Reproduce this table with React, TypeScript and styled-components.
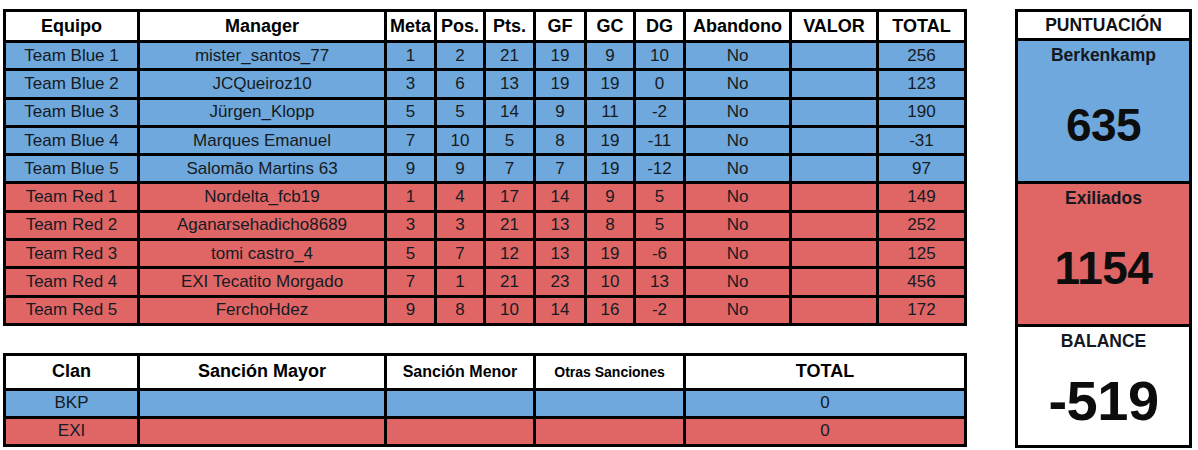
import React from "react";
import styled, { createGlobalStyle } from "styled-components";

const Global = createGlobalStyle`
  html, body { margin: 0; padding: 0; background: #ffffff; }
  body { font-family: "Liberation Sans", Arial, sans-serif; color: #111; }
`;

const BLUE = "#6fa8dc";
const RED = "#e06666";

const Page = styled.div`
  display: flex;
  align-items: flex-start;
  padding: 9px 0 0 3px;
  width: 1198px;
  height: 450px;
  box-sizing: border-box;
`;

const LeftCol = styled.div`
  display: flex;
  flex-direction: column;
  gap: 27px;
  width: 964px;
`;

const MainGrid = styled.div`
  display: grid;
  grid-template-columns: 131px 244px 47px 46px 47px 48px 46px 47px 103px 84px 85px;
  grid-template-rows: 28px repeat(10, 25.3px);
  gap: 3px;
  padding: 3px;
  background: #000;
`;

const ClanGrid = styled.div`
  display: grid;
  grid-template-columns: 131px 244px 146px 147px 278px;
  grid-template-rows: 32px 25px 25px;
  gap: 3px;
  padding: 3px;
  background: #000;
`;

const Cell = styled.div<{ $bg: string }>`
  background: ${(p) => p.$bg};
  display: flex;
  align-items: center;
  justify-content: center;
  font-size: 17px;
  color: #161a22;
  white-space: nowrap;
  overflow: hidden;
`;

const HeadCell = styled.div<{ $size?: number }>`
  background: #fff;
  display: flex;
  align-items: center;
  justify-content: center;
  font-weight: bold;
  font-size: ${(p) => p.$size ?? 18}px;
  color: #000;
  white-space: nowrap;
  overflow: hidden;
`;

const Panel = styled.div`
  margin-left: 48px;
  width: 177px;
  height: 439px;
  box-sizing: border-box;
  display: grid;
  grid-template-rows: 26px 140px 140px 1fr;
  gap: 3px;
  padding: 3px;
  background: #000;
`;

const PanelHead = styled.div`
  background: #fff;
  display: flex;
  align-items: center;
  justify-content: center;
  font-weight: bold;
  font-size: 17.5px;
  color: #111;
`;

const Section = styled.div<{ $bg: string }>`
  background: ${(p) => p.$bg};
  display: flex;
  flex-direction: column;
  align-items: center;
`;

const SectionLabel = styled.div`
  height: 28px;
  display: flex;
  align-items: center;
  font-weight: bold;
  font-size: 17.5px;
  color: #15181f;
`;

const BigNumber = styled.div<{ $size: number }>`
  flex: 1;
  display: flex;
  align-items: center;
  justify-content: center;
  font-weight: bold;
  font-size: ${(p) => p.$size}px;
  color: #0d0d0d;
  letter-spacing: -0.5px;
`;

type Row = (string | number)[];

const rows: Row[] = [
  ["Team Blue 1", "mister_santos_77", 1, 2, 21, 19, 9, 10, "No", "", 256],
  ["Team Blue 2", "JCQueiroz10", 3, 6, 13, 19, 19, 0, "No", "", 123],
  ["Team Blue 3", "Jürgen_Klopp", 5, 5, 14, 9, 11, -2, "No", "", 190],
  ["Team Blue 4", "Marques Emanuel", 7, 10, 5, 8, 19, -11, "No", "", -31],
  ["Team Blue 5", "Salomão Martins 63", 9, 9, 7, 7, 19, -12, "No", "", 97],
  ["Team Red 1", "Nordelta_fcb19", 1, 4, 17, 14, 9, 5, "No", "", 149],
  ["Team Red 2", "Aganarsehadicho8689", 3, 3, 21, 13, 8, 5, "No", "", 252],
  ["Team Red 3", "tomi castro_4", 5, 7, 12, 13, 19, -6, "No", "", 125],
  ["Team Red 4", "EXI Tecatito Morgado", 7, 1, 21, 23, 10, 13, "No", "", 456],
  ["Team Red 5", "FerchoHdez", 9, 8, 10, 14, 16, -2, "No", "", 172],
];

const headers = ["Equipo", "Manager", "Meta", "Pos.", "Pts.", "GF", "GC", "DG", "Abandono", "VALOR", "TOTAL"];

export default function App() {
  return (
    <>
      <Global />
      <Page>
        <LeftCol>
          <MainGrid>
            {headers.map((h) => (
              <HeadCell key={h}>{h}</HeadCell>
            ))}
            {rows.map((r, i) =>
              r.map((v, j) => (
                <Cell key={`${i}-${j}`} $bg={i < 5 ? BLUE : RED}>
                  {v}
                </Cell>
              ))
            )}
          </MainGrid>
          <ClanGrid>
            <HeadCell $size={18}>Clan</HeadCell>
            <HeadCell $size={18}>Sanción Mayor</HeadCell>
            <HeadCell $size={16}>Sanción Menor</HeadCell>
            <HeadCell $size={14}>Otras Sanciones</HeadCell>
            <HeadCell $size={18}>TOTAL</HeadCell>
            <Cell $bg={BLUE}>BKP</Cell>
            <Cell $bg={BLUE} />
            <Cell $bg={BLUE} />
            <Cell $bg={BLUE} />
            <Cell $bg={BLUE}>0</Cell>
            <Cell $bg={RED}>EXI</Cell>
            <Cell $bg={RED} />
            <Cell $bg={RED} />
            <Cell $bg={RED} />
            <Cell $bg={RED}>0</Cell>
          </ClanGrid>
        </LeftCol>
        <Panel>
          <PanelHead>PUNTUACIÓN</PanelHead>
          <Section $bg={BLUE}>
            <SectionLabel>Berkenkamp</SectionLabel>
            <BigNumber $size={46}>635</BigNumber>
          </Section>
          <Section $bg={RED}>
            <SectionLabel>Exiliados</SectionLabel>
            <BigNumber $size={46}>1154</BigNumber>
          </Section>
          <Section $bg="#fff">
            <SectionLabel>BALANCE</SectionLabel>
            <BigNumber $size={56}>-519</BigNumber>
          </Section>
        </Panel>
      </Page>
    </>
  );
}
